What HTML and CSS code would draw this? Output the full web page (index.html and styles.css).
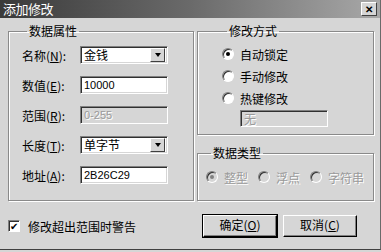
FILE: index.html
```html
<!DOCTYPE html>
<html>
<head>
<meta charset="utf-8">
<title>添加修改</title>
<link rel="stylesheet" href="styles.css">
</head>
<body>
<div class="dialog">
  <div class="titlebar">
    <span class="title">添加修改</span>
    <span class="close">✕</span>
  </div>
  <div class="main">
    <fieldset class="grp props">
      <legend>数据属性</legend>
      <div class="row">
        <label>名称(<u>N</u>):</label>
        <div class="combo"><span class="val">金钱</span><span class="drop"></span></div>
      </div>
      <div class="row">
        <label>数值(<u>E</u>):</label>
        <div class="edit num">10000</div>
      </div>
      <div class="row">
        <label class="dim">范围(<u>R</u>):</label>
        <div class="edit num off">0-255</div>
      </div>
      <div class="row">
        <label>长度(<u>T</u>):</label>
        <div class="combo"><span class="val">单字节</span><span class="drop"></span></div>
      </div>
      <div class="row">
        <label>地址(<u>A</u>):</label>
        <div class="edit num">2B26C29</div>
      </div>
    </fieldset>
    <div class="side">
      <fieldset class="grp mode">
        <legend>修改方式</legend>
        <div class="opt"><span class="radio on"></span>自动锁定</div>
        <div class="opt"><span class="radio"></span>手动修改</div>
        <div class="opt"><span class="radio"></span>热键修改</div>
        <div class="edit off hotkey">无</div>
      </fieldset>
      <fieldset class="grp types">
        <legend>数据类型</legend>
        <div class="typerow">
          <div class="opt off"><span class="radio on"></span>整型</div>
          <div class="opt off"><span class="radio"></span>浮点</div>
          <div class="opt off"><span class="radio"></span>字符串</div>
        </div>
      </fieldset>
    </div>
  </div>
  <div class="footer">
    <div class="check"><span class="box">✔</span>修改超出范围时警告</div>
    <div class="btn default">确定(<u>O</u>)</div>
    <div class="btn">取消(<u>C</u>)</div>
  </div>
</div>
</body>
</html>
```
FILE: styles.css
```css
body{margin:0;background:#d6d6d6;font-family:"Noto Sans CJK SC","Liberation Sans",sans-serif;font-size:12px;color:#000;}
.dialog{width:380px;height:249px;border-right:1px solid #6a6a6a;border-bottom:1px solid #404040;overflow:hidden;}
.titlebar{height:18px;display:flex;align-items:center;justify-content:space-between;padding:0 3px 0 3px;background:linear-gradient(to right,#3a3a3a,#6a6a6a 50%,#a8a8a8);color:#fff;}
.title{font-size:13px;line-height:18px;letter-spacing:-0.5px;}
.close{width:14px;height:12px;background:#d6d6d6;color:#000;font-size:10px;line-height:12px;text-align:center;border:1px solid;border-color:#fff #404040 #404040 #fff;font-weight:bold;}
.main{display:flex;gap:3px;padding:6px 0 0 8px;}
.grp{margin:0;border:1px solid #8a8a8a;box-shadow:inset 1px 1px 0 #fff,1px 1px 0 #fff;}
.grp legend{font-size:12px;line-height:14px;padding:0 2px;margin-left:5px;}
.props{width:186px;box-sizing:border-box;padding:8px 0 16px 13px;display:flex;flex-direction:column;gap:12px;}
.row{display:flex;align-items:center;height:18px;}
.row label{width:58px;white-space:nowrap;}
.row u,.btn u{text-decoration:underline;}
.dim{color:#000;}
.edit,.combo{width:88px;height:18px;box-sizing:border-box;background:#fff;border:1px solid;border-color:#808080 #fff #fff #808080;box-shadow:inset 1px 1px 0 #303030,inset -1px -1px 0 #d6d6d6;}
.edit{padding:0 3px;line-height:16px;}
.num{font-family:"Liberation Sans",sans-serif;font-size:11px;}
.edit.off{background:#d6d6d6;color:#9a9a9a;text-shadow:1px 1px 0 #fff;}
.combo{display:flex;align-items:center;justify-content:space-between;padding:0 2px 0 3px;}
.val{line-height:14px;}
.drop{width:15px;height:14px;box-sizing:border-box;background:#d6d6d6;border:1px solid;border-color:#fff #404040 #404040 #fff;display:flex;align-items:center;justify-content:center;}
.drop::after{content:"";border:3px solid transparent;border-top:4px solid #000;border-bottom:0;}
.side{display:flex;flex-direction:column;gap:11px;}
.mode{width:177px;box-sizing:border-box;padding:8px 0 7px 24px;display:flex;flex-direction:column;gap:6px;}
.opt{display:flex;align-items:center;height:16px;gap:6px;white-space:nowrap;}
.radio{width:12px;height:12px;box-sizing:border-box;border-radius:50%;background:#fff;border:1px solid;border-color:#808080 #fff #fff #808080;box-shadow:inset 1px 1px 0 #303030;display:flex;align-items:center;justify-content:center;}
.radio.on::after{content:"";width:4px;height:4px;border-radius:50%;background:#000;}
.hotkey{margin:-2px 0 0 18px;height:17px;line-height:15px;}
.types{width:177px;box-sizing:border-box;padding:9px 0 15px 8px;}
.typerow{display:grid;grid-template-columns:52px 52px 60px;}
.opt.off{color:#9a9a9a;text-shadow:1px 1px 0 #fff;}
.opt.off .radio{background:#d6d6d6;}
.opt.off .radio.on::after{background:#808080;}
.footer{display:flex;align-items:center;padding:14px 0 0 8px;}
.check{display:flex;align-items:center;gap:8px;width:195px;}
.box{width:12px;height:12px;box-sizing:border-box;background:#fff;border:1px solid;border-color:#808080 #fff #fff #808080;box-shadow:inset 1px 1px 0 #303030;font-size:10px;line-height:10px;text-align:center;}
.btn{width:74px;height:22px;box-sizing:border-box;margin-right:6px;text-align:center;line-height:18px;background:#d6d6d6;border:1px solid;border-color:#fff #000 #000 #fff;box-shadow:inset -1px -1px 0 #808080;}
.btn.default{outline:1px solid #000;}
```
